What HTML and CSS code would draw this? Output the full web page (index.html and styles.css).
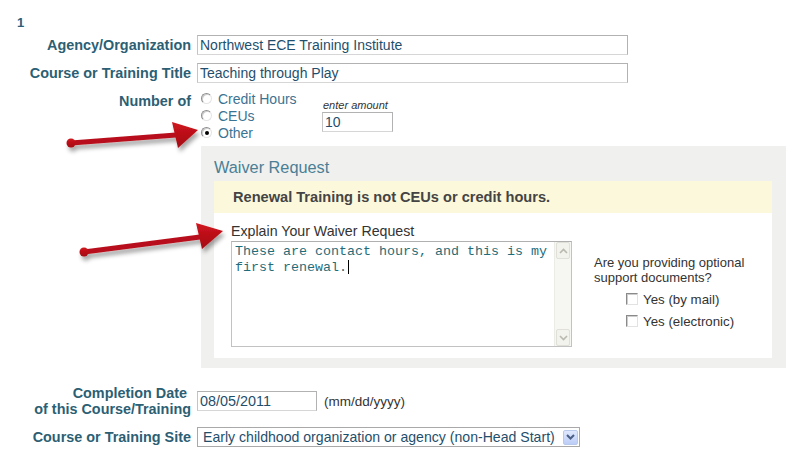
FILE: index.html
```html
<!DOCTYPE html>
<html lang="en">

<head>
    <meta charset="UTF-8">
    <meta name="viewport" content="width=device-width, initial-scale=1.0">
    <title>Renewal Training</title>
    <link rel="stylesheet" href="styles.css">
</head>

<body>
    <div class="page">
        <div class="item-num">1</div>

        <div class="row row-first">
            <label class="lbl">Agency/Organization</label>
            <div class="field"><input class="txt wide" type="text" value="Northwest ECE Training Institute"></div>
        </div>

        <div class="row">
            <label class="lbl">Course or Training Title</label>
            <div class="field"><input class="txt wide" type="text" value="Teaching through Play"></div>
        </div>

        <div class="row row-number">
            <label class="lbl lbl-number">Number of</label>
            <div class="field">
                <div class="number-line">
                    <div class="radios">
                        <div class="opt"><span class="radio"></span>Credit Hours</div>
                        <div class="opt"><span class="radio"></span>CEUs</div>
                        <div class="opt"><span class="radio checked"></span>Other</div>
                    </div>
                    <div class="amount">
                        <div class="amount-hint">enter amount</div>
                        <input class="txt short" type="text" value="10">
                    </div>
                </div>

                <div class="waiver">
                    <h3 class="waiver-title">Waiver Request</h3>
                    <div class="notice">Renewal Training is not CEUs or credit hours.</div>
                    <div class="waiver-body">
                        <div class="explain">
                            <div class="explain-lbl">Explain Your Waiver Request</div>
                            <div class="textarea">
                                <div class="textarea-text">These are contact hours, and this is my first renewal.<span class="caret"></span></div>
                                <div class="scrollbar">
                                    <div class="sb-btn">
                                        <svg width="9" height="6" viewBox="0 0 9 6"><path d="M1 5 L4.5 1.5 L8 5" fill="none" stroke="#b9b9b0" stroke-width="1.6"/></svg>
                                    </div>
                                    <div class="sb-track"></div>
                                    <div class="sb-btn">
                                        <svg width="9" height="6" viewBox="0 0 9 6"><path d="M1 1 L4.5 4.5 L8 1" fill="none" stroke="#b9b9b0" stroke-width="1.6"/></svg>
                                    </div>
                                </div>
                            </div>
                        </div>
                        <div class="support">
                            <div class="support-q">Are you providing optional<br>support documents?</div>
                            <div class="checks">
                                <div class="check-row"><span class="checkbox"></span>Yes (by mail)</div>
                                <div class="check-row"><span class="checkbox"></span>Yes (electronic)</div>
                            </div>
                        </div>
                    </div>
                </div>
            </div>
        </div>

        <div class="row row-date">
            <label class="lbl lbl-date">Completion Date&nbsp;<br>of this Course/Training</label>
            <div class="field date-field">
                <input class="txt date" type="text" value="08/05/2011">
                <span class="date-hint">(mm/dd/yyyy)</span>
            </div>
        </div>

        <div class="row row-site">
            <label class="lbl">Course or Training Site</label>
            <div class="field">
                <div class="select">
                    <span class="select-text">Early childhood organization or agency (non-Head Start)</span>
                    <span class="select-btn">
                        <svg width="9" height="6" viewBox="0 0 9 6"><path d="M1 1 L4.5 4.5 L8 1" fill="none" stroke="#4b5f86" stroke-width="2"/></svg>
                    </span>
                </div>
            </div>
        </div>

        <!-- annotation arrows drawn over the form -->
        <svg class="arrows" width="794" height="452" viewBox="0 0 794 452">
            <defs>
                <filter id="shadow" x="-20%" y="-50%" width="140%" height="220%">
                    <feDropShadow dx="2" dy="4" stdDeviation="2" flood-color="#000" flood-opacity="0.35"/>
                </filter>
                <linearGradient id="red" x1="0" y1="0" x2="0" y2="1">
                    <stop offset="0" stop-color="#d0141e"/>
                    <stop offset="1" stop-color="#a30b12"/>
                </linearGradient>
            </defs>
            <g filter="url(#shadow)" fill="url(#red)">
                <line x1="71" y1="143" x2="176" y2="135" stroke="#b8101a" stroke-width="5"/>
                <circle cx="71" cy="143" r="4.5"/>
                <polygon points="172,122 178,148 198,130"/>
            </g>
            <g filter="url(#shadow)" fill="url(#red)">
                <line x1="84" y1="252" x2="200" y2="237" stroke="#b8101a" stroke-width="5"/>
                <circle cx="84" cy="252" r="4.5"/>
                <polygon points="196,223 202,249 223,231"/>
            </g>
        </svg>
    </div>
</body>

</html>
```

FILE: styles.css
```css
* {
    box-sizing: border-box;
}

body {
    margin: 0;
    font-family: "Liberation Sans", Arial, sans-serif;
    font-size: 14px;
    color: #333;
    background: #fff;
}

.page {
    position: relative;
    width: 794px;
    height: 452px;
    padding-top: 15px;
    overflow: hidden;
}

.item-num {
    margin-left: 17px;
    margin-bottom: 5px;
    font-size: 13px;
    font-weight: bold;
    line-height: 15px;
    color: #2c6078;
}

.row {
    display: grid;
    grid-template-columns: 191px auto;
    column-gap: 6px;
    align-items: start;
    margin-top: 8px;
}

.row-first {
    margin-top: 0;
}

.row-number {
    margin-top: 7px;
}

.row-date {
    margin-top: 17px;
}

.row-site {
    margin-top: 10px;
}

.lbl {
    text-align: right;
    font-size: 14.4px;
    font-weight: bold;
    line-height: 20px;
    color: #2c5f74;
    white-space: nowrap;
}

.lbl-number {
    line-height: 17px;
    padding-top: 3px;
}

.lbl-date {
    line-height: 16px;
}

/* text inputs */
.txt {
    display: block;
    height: 20px;
    margin: 0;
    padding: 0 2px;
    font-family: "Liberation Sans", Arial, sans-serif;
    font-size: 14px;
    color: #1f4f6c;
    background: #fff;
    border: 1px solid #b2b2b2;
    border-bottom-color: #d6d6d6;
    border-left-color: #c4c4c4;
    outline: none;
}

.wide {
    width: 431px;
}

.short {
    width: 71px;
}

.date {
    width: 120px;
    font-size: 14.4px;
}

/* number of */
.number-line {
    display: flex;
}

.radios {
    width: 125px;
    padding-left: 4px;
}

.opt {
    display: flex;
    align-items: center;
    height: 17px;
    color: #3b7393;
}

.radio {
    position: relative;
    width: 11px;
    height: 11px;
    margin-right: 6px;
    border-radius: 50%;
    border: 1px solid;
    border-color: #8e8e8e #e4e4e4 #e4e4e4 #8e8e8e;
    background: #fff;
    box-shadow: inset 1px 1px 0 #cfcfcf;
}

.radio.checked::after {
    content: "";
    position: absolute;
    left: 3px;
    top: 3px;
    width: 4px;
    height: 4px;
    border-radius: 50%;
    background: #000;
}

.amount {
    margin-top: 9px;
}

.amount-hint {
    margin-left: 1px;
    font-size: 11px;
    font-style: italic;
    line-height: 13px;
    color: #333;
}

/* waiver box */
.waiver {
    width: 585px;
    margin: 5px 0 0 4px;
    padding: 12px 14px 10px 13px;
    background: #f0f0ee;
}

.waiver-title {
    margin: 0 0 5px;
    font-size: 16.3px;
    font-weight: normal;
    line-height: 18px;
    color: #4a7f96;
}

.notice {
    height: 32px;
    padding-left: 19px;
    font-size: 14.6px;
    line-height: 32px;
    font-weight: bold;
    color: #444;
    background: #fcf8dc;
}

.waiver-body {
    display: flex;
    padding: 11px 0 11px 17px;
    background: #fff;
}

.explain-lbl {
    font-size: 14.2px;
    line-height: 15px;
    margin-bottom: 2px;
    color: #333;
}

.textarea {
    display: flex;
    width: 341px;
    height: 106px;
    border: 1px solid #c2c2c2;
    border-top-color: #b0b0b0;
}

.textarea-text {
    flex: 1;
    padding: 2px 3px;
    font-family: "Liberation Mono", "Courier New", monospace;
    font-size: 13.33px;
    line-height: 16px;
    color: #1f6d7a;
}

.caret {
    display: inline-block;
    width: 0;
    height: 14px;
    margin-left: 1px;
    vertical-align: -3px;
    border-left: 1px solid #000;
}

.scrollbar {
    display: flex;
    flex-direction: column;
    width: 17px;
    background: #f6f6f2;
    border-left: 1px solid #ecece6;
}

.sb-btn {
    display: flex;
    align-items: center;
    justify-content: center;
    height: 17px;
    margin: 0 1px;
    border: 1px solid #e0e0d8;
    border-radius: 2px;
    background: #f3f3ee;
}

.sb-track {
    flex: 1;
}

.support {
    margin-left: 22px;
    padding-top: 31px;
}

.support-q {
    font-size: 13px;
    line-height: 15px;
    color: #333;
}

.checks {
    margin-top: 3px;
    padding-left: 32px;
}

.check-row {
    display: flex;
    align-items: center;
    height: 22px;
    font-size: 13.3px;
    color: #333;
}

.checkbox {
    width: 12px;
    height: 12px;
    margin-right: 5px;
    border: 1px solid;
    border-color: #8a8a8a #e2e2e2 #e2e2e2 #8a8a8a;
    background: #fff;
    box-shadow: inset 1px 1px 0 #cdcdcd;
}

/* date */
.date-field {
    display: flex;
    align-items: center;
    padding-top: 6px;
}

.date-hint {
    margin-left: 7px;
    font-size: 13.5px;
    color: #333;
}

/* select */
.select {
    display: flex;
    align-items: center;
    width: 383px;
    height: 20px;
    padding: 0 1px 0 5px;
    border: 1px solid #a9a9a9;
    background: #fff;
    color: #1f4f6c;
}

.select-text {
    flex: 1;
    white-space: nowrap;
    font-size: 14.1px;
}

.select-btn {
    display: flex;
    align-items: center;
    justify-content: center;
    width: 15px;
    height: 15px;
    border: 1px solid #b9c9ec;
    border-radius: 2px;
    background: linear-gradient(#dfe8fd, #bccdf7);
}

.arrows {
    position: absolute;
    left: 0;
    top: 0;
    pointer-events: none;
}
```
